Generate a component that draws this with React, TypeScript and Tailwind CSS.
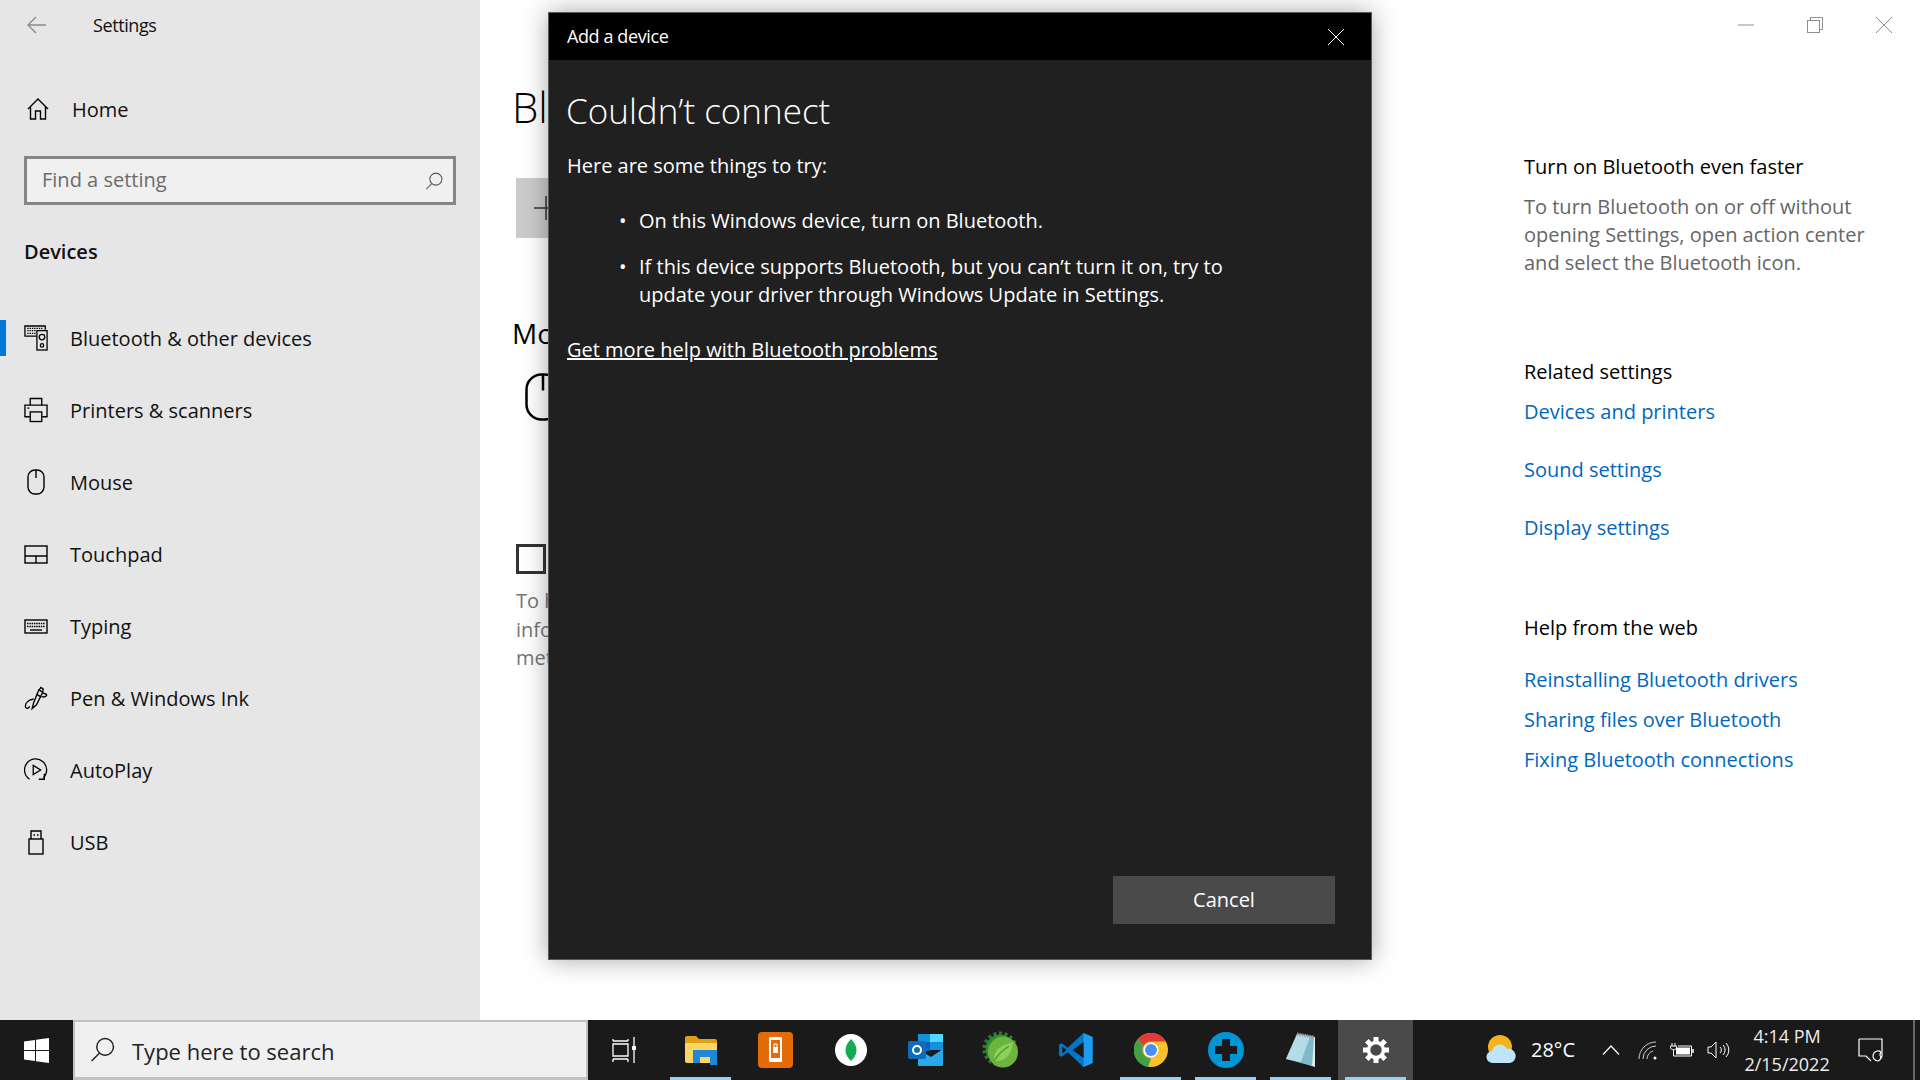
import { ReactNode } from "react";

const stroke = {
  fill: "none",
  stroke: "currentColor",
  strokeWidth: 1.4,
};

function BluetoothDevicesIcon() {
  return (
    <svg width="26" height="28" viewBox="0 0 26 28" {...stroke}>
      <path d="M14 12H1V1h22v4" />
      <path d="M3.5 3.500h17M3.500 6h9M3.500 9h9" strokeDasharray="1.5 1" />
      <rect x="14" y="6" width="11" height="21" />
      <circle cx="19.5" cy="13" r="3" />
      <circle cx="19.5" cy="22" r="1.8" />
    </svg>
  );
}

function PrinterIcon() {
  return (
    <svg width="25" height="26" viewBox="0 0 25 26" {...stroke}>
      <path d="M6.5 8V1h12v7" />
      <path d="M6 20H1V8h23v12h-5" />
      <rect x="6.5" y="15" width="12" height="10" />
      <path d="M3.5 11h2" />
    </svg>
  );
}

function MouseIcon() {
  return (
    <svg width="18" height="26" viewBox="0 0 18 26" {...stroke}>
      <rect x="1" y="1" width="16" height="24" rx="7" />
      <path d="M9 1v8" />
    </svg>
  );
}

function TouchpadIcon() {
  return (
    <svg width="24" height="19" viewBox="0 0 24 19" {...stroke}>
      <rect x="1" y="1" width="22" height="17" />
      <path d="M1 11h22M12 11v7" />
    </svg>
  );
}

function KeyboardIcon() {
  return (
    <svg width="24" height="15" viewBox="0 0 24 15" {...stroke}>
      <rect x="1" y="1" width="22" height="13" />
      <path d="M3 4.500h18M3 7.500h18" strokeDasharray="1.5 0.8" />
      <path d="M6 11h12" />
    </svg>
  );
}

function PenIcon() {
  return (
    <svg width="25" height="25" viewBox="0 0 25 25" {...stroke}>
      <path d="M10 17l-1.500 6 4.500-4 6.500-13-4-2.500z" />
      <path d="M13 8l5 3" />
      <path d="M16 3.500L17.500 1 20 2.500 19.500 6" />
      <path d="M20 7c3 .5 4.500 1.500 3 3-1 1-3 1-4.500 .5" />
      <path d="M10 13c-5 1-9 4-8.500 8 .3 2.500 3.500 2 4.500-.5" />
    </svg>
  );
}

function AutoPlayIcon() {
  return (
    <svg width="26" height="26" viewBox="0 0 26 26" {...stroke}>
      <path d="M6 23A12 12 0 1 1 21 21.5" />
      <path d="M10 8l8 5-8 5z" />
      <path d="M22 17v6h-6" />
    </svg>
  );
}

function UsbIcon() {
  return (
    <svg width="16" height="25" viewBox="0 0 16 25" {...stroke}>
      <path d="M3 9V1h10v8" />
      <rect x="1" y="9" width="14" height="15" />
      <path d="M5.500 5h1.500M9 5h1.500" />
    </svg>
  );
}

function SearchGlass({ size = 18 }: { size?: number }) {
  return (
    <svg width={size} height={size} viewBox="0 0 24 24" {...stroke}>
      <circle cx="14.5" cy="9.5" r="8" />
      <path d="M9 15.500L1.500 23" />
    </svg>
  );
}

function NavItem({ icon, label, active }: { icon: ReactNode; label: string; active?: boolean }) {
  return (
    <div className="relative flex h-[72px] items-center">
      {active && <div className="absolute top-[18px] left-0 h-[36px] w-[6px] bg-[#0078d7]" />}
      <div className="ml-[24px] flex w-[46px] items-center">
        <div className="flex w-[24px] justify-center">{icon}</div>
      </div>
      <span className="mt-[2px] text-[20px] text-[#111]">{label}</span>
    </div>
  );
}

function SettingsSidebar() {
  return (
    <aside className="flex h-full w-[480px] shrink-0 flex-col bg-[#e6e6e6]">
      <div className="flex h-[50px] items-center">
        <svg className="ml-[27px] text-[#8a8a8a]" width="19" height="18" viewBox="0 0 19 18" {...stroke}>
          <path d="M19 9H1M9 1L1 9l8 8" />
        </svg>
        <span className="ml-[47px] text-[18px] tracking-[-0.4px] text-[#111]">Settings</span>
      </div>
      <div className="mt-[23px] flex h-[72px] items-center">
        <svg className="ml-[27px]" width="22" height="22" viewBox="0 0 22 22" {...stroke}>
          <path d="M1 11L11 1l10 10" />
          <path d="M3.500 9v12h5v-8h5v8h5V9" />
        </svg>
        <span className="mt-[2px] ml-[23px] text-[20px] text-[#111]">Home</span>
      </div>
      <div className="mx-[24px] mt-[11px] flex h-[49px] items-center border-[3px] border-[#858585] bg-[#f0f0f0] pr-[10px] pl-[15px]">
        <span className="mb-[2px] flex-1 text-[20px] text-[#6b6b6b]">Find a setting</span>
        <span className="text-[#555]">
          <SearchGlass />
        </span>
      </div>
      <div className="mt-[32px] ml-[24px] h-[30px] text-[20px] leading-[30px] font-semibold text-[#111]">Devices</div>
      <nav className="mt-[35px] flex flex-col">
        <NavItem active icon={<BluetoothDevicesIcon />} label="Bluetooth & other devices" />
        <NavItem icon={<PrinterIcon />} label="Printers & scanners" />
        <NavItem icon={<MouseIcon />} label="Mouse" />
        <NavItem icon={<TouchpadIcon />} label="Touchpad" />
        <NavItem icon={<KeyboardIcon />} label="Typing" />
        <NavItem icon={<PenIcon />} label="Pen & Windows Ink" />
        <NavItem icon={<AutoPlayIcon />} label="AutoPlay" />
        <NavItem icon={<UsbIcon />} label="USB" />
      </nav>
    </aside>
  );
}

function MainColumn() {
  return (
    <div className="w-[1044px] shrink-0 overflow-hidden pt-[79px] pl-[32px]">
      <div className="h-[56px] text-[42px] leading-[56px] font-light text-black">Bl</div>
      <div className="mt-[43px] ml-[4px] flex h-[60px] w-[400px] items-center bg-[#cccccc] pl-[18px]">
        <svg width="24" height="24" viewBox="0 0 24 24" fill="none" stroke="#333" strokeWidth="1.5">
          <path d="M12 0v24M0 12h24" />
        </svg>
      </div>
      <div className="mt-[75px] h-[40px] text-[28px] leading-[40px] text-black">Mo</div>
      <div className="mt-[20px] ml-[13px] text-black">
        <svg width="36" height="48" viewBox="0 0 36 48" fill="none" stroke="currentColor" strokeWidth="2.5">
          <rect x="1.5" y="1.5" width="33" height="45" rx="15" />
          <path d="M18 1.500v16" />
        </svg>
      </div>
      <div className="mt-[123px] ml-[4px] size-[30px] border-[3px] border-[#333]" />
      <p className="mt-[13px] ml-[4px] w-[40px] overflow-hidden text-[20px] leading-[28.5px] whitespace-nowrap text-[#767676]">
        To h
        <br />
        info
        <br />
        met
      </p>
    </div>
  );
}

function InfoColumn() {
  const link = "text-[20px] leading-[28px] text-[#0067c0]";
  return (
    <div className="flex-1">
      <div className="flex h-[50px] justify-end pr-[2px] text-[#8f8f8f]">
        <div className="flex w-[69px] items-center justify-center">
          <svg width="16" height="16" viewBox="0 0 16 16" {...stroke} strokeWidth="1">
            <path d="M0 8h16" />
          </svg>
        </div>
        <div className="flex w-[69px] items-center justify-center">
          <svg width="16" height="16" viewBox="0 0 16 16" {...stroke} strokeWidth="1">
            <rect x="0.5" y="3.5" width="12" height="12" />
            <path d="M3.500 3.500v-3h12v12h-3" />
          </svg>
        </div>
        <div className="flex w-[69px] items-center justify-center">
          <svg width="16" height="16" viewBox="0 0 16 16" {...stroke} strokeWidth="1">
            <path d="M0 0l16 16M16 0L0 16" />
          </svg>
        </div>
      </div>
      <div className="mt-[103px] text-[20px] leading-[28px] text-black">Turn on Bluetooth even faster</div>
      <p className="mt-[12px] w-[396px] text-[20px] leading-[28px] text-[#666]">
        To turn Bluetooth on or off without
        <br />
        opening Settings, open action center
        <br />
        and select the Bluetooth icon.
      </p>
      <div className="mt-[81px] text-[20px] leading-[28px] text-black">Related settings</div>
      <div className="mt-[12px] flex flex-col gap-[30px]">
        <span className={link}>Devices and printers</span>
        <span className={link}>Sound settings</span>
        <span className={link}>Display settings</span>
      </div>
      <div className="mt-[72px] text-[20px] leading-[28px] text-black">Help from the web</div>
      <div className="mt-[24px] flex flex-col gap-[12px]">
        <span className={link}>Reinstalling Bluetooth drivers</span>
        <span className={link}>Sharing files over Bluetooth</span>
        <span className={link}>Fixing Bluetooth connections</span>
      </div>
    </div>
  );
}

function AddDeviceDialog() {
  return (
    <div className="absolute top-[12px] left-[548px] flex h-[948px] w-[824px] flex-col border border-[#5a5a5a] bg-[#202020] text-white shadow-[0_0_24px_rgba(0,0,0,0.35)]">
      <div className="flex h-[47px] shrink-0 items-center justify-between bg-black pr-[27px] pl-[18px]">
        <span className="text-[18px] tracking-[-0.4px]">Add a device</span>
        <svg width="16" height="16" viewBox="0 0 16 16" fill="none" stroke="white" strokeWidth="1">
          <path d="M0 0l16 16M16 0L0 16" />
        </svg>
      </div>
      <div className="flex flex-1 flex-col px-[17px]">
        <h1 className="mt-[27px] h-[48px] text-[35px] leading-[48px] font-light">Couldn’t connect</h1>
        <p className="mt-[17px] ml-[1px] text-[20px] leading-[28px]">Here are some things to try:</p>
        <ul className="mt-[27px] flex flex-col gap-[17px]">
          <li className="flex text-[20px] leading-[28.5px]">
            <span className="ml-[53px] w-[20px]">•</span>
            <span>On this Windows device, turn on Bluetooth.</span>
          </li>
          <li className="flex text-[20px] leading-[28.5px]">
            <span className="ml-[53px] w-[20px]">•</span>
            <span>
              If this device supports Bluetooth, but you can’t turn it on, try to
              <br />
              update your driver through Windows Update in Settings.
            </span>
          </li>
        </ul>
        <a className="mt-[26px] ml-[1px] text-[20px] leading-[28px] underline">Get more help with Bluetooth problems</a>
        <div className="mt-auto mb-[35px] flex justify-end pr-[19px]">
          <button className="h-[48px] w-[222px] bg-[#4a4a4a] text-[20px] text-white">Cancel</button>
        </div>
      </div>
    </div>
  );
}

function TaskSlot({ children, open, active }: { children: ReactNode; open?: boolean; active?: boolean }) {
  return (
    <div className={`relative flex h-full w-[75px] items-center justify-center ${active ? "bg-[#4a4a4a]" : ""}`}>
      {children}
      {open && <div className="absolute right-[7px] bottom-0 left-[7px] h-[3px] bg-[#99cff0]" />}
    </div>
  );
}

function FileExplorerIcon() {
  return (
    <svg width="32" height="30" viewBox="0 0 32 30">
      <path d="M0 3a2 2 0 0 1 2-2h9l3 3h16a2 2 0 0 1 2 2v4H0z" fill="#e0a016" />
      <path d="M0 8h32v18a2 2 0 0 1-2 2H2a2 2 0 0 1-2-2z" fill="#fbd667" />
      <path d="M8 15h24v15h-7v-8H15v6H8z" fill="#1e88d8" />
    </svg>
  );
}

function PhoneAppIcon() {
  return (
    <svg width="35" height="36" viewBox="0 0 35 36">
      <rect width="35" height="36" rx="4" fill="#e36c09" />
      <rect x="11" y="5" width="13" height="25" rx="1" fill="#fff" />
      <rect x="13" y="8" width="9" height="18" fill="#e36c09" />
      <rect x="15" y="15" width="5" height="6" fill="#fff" />
      <path d="M16 15v-3h3v3" fill="none" stroke="#fff" />
    </svg>
  );
}

function MongoIcon() {
  return (
    <svg width="32" height="32" viewBox="0 0 32 32">
      <circle cx="16" cy="16" r="16" fill="#fff" />
      <path d="M16 5c4 4 5.500 7.500 5.500 11.500S19 24 16 27c-3-3-5.500-6.500-5.500-10.500S12 9 16 5z" fill="#13aa52" />
    </svg>
  );
}

function OutlookIcon() {
  return (
    <svg width="36" height="34" viewBox="0 0 36 34">
      <rect x="10" y="1" width="25" height="16" fill="#1490df" />
      <rect x="22" y="1" width="13" height="8" fill="#50d9ff" />
      <rect x="10" y="9" width="12" height="9" fill="#0364b8" />
      <path d="M10 16l13 8 12-8v16a1 1 0 0 1-1 1H11a1 1 0 0 1-1-1z" fill="#28a8ea" />
      <rect x="0" y="8" width="18" height="18" rx="2" fill="#0f6cbd" />
      <circle cx="9" cy="17" r="4" fill="none" stroke="#fff" strokeWidth="2" />
    </svg>
  );
}

function SpringIcon() {
  return (
    <svg width="38" height="38" viewBox="0 0 38 38">
      <circle cx="18" cy="18" r="15.500" fill="none" stroke="#2a7d2e" strokeWidth="4" strokeDasharray="3 2.500" />
      <circle cx="18" cy="18" r="14.500" fill="#2f8a32" />
      <ellipse cx="21" cy="21" rx="15" ry="15.500" fill="#6db33f" />
      <path d="M12 30c-1-11 7-16 19-19-1 12-7 20-19 19z" fill="#8fd05a" />
      <path d="M12 30c4-7 9-11 15-15" fill="none" stroke="#4c9a2a" strokeWidth="1.500" />
    </svg>
  );
}

function VsCodeIcon() {
  return (
    <svg width="36" height="36" viewBox="0 0 100 100">
      <path d="M71 3L96 14v72L71 97 27 56 10 69 3 65V35l7-4 17 13z" fill="#0078c8" />
      <path d="M71 3L96 14v72L71 97z" fill="#1f9cf0" />
      <path d="M71 28v44L40 50z" fill="#1a1a1a" />
      <path d="M12 40l12 10-12 10z" fill="#1a1a1a" />
    </svg>
  );
}

function ChromeIcon() {
  return (
    <svg width="34" height="34" viewBox="0 0 34 34">
      <circle cx="17" cy="17" r="17" fill="#fbc02d" />
      <path d="M17 0a17 17 0 0 1 14.700 8.500H17a8.500 8.500 0 0 0-7.400 4.300L3.800 6.200A17 17 0 0 1 17 0z" fill="#e53935" />
      <path d="M3.800 6.200l5.800 6.600a8.500 8.500 0 0 0 7.400 12.700L14 34A17 17 0 0 1 3.800 6.200z" fill="#43a047" />
      <circle cx="17" cy="17" r="7.500" fill="#fff" />
      <circle cx="17" cy="17" r="6" fill="#4c8df6" />
    </svg>
  );
}

function PlusAppIcon() {
  return (
    <svg width="36" height="36" viewBox="0 0 36 36">
      <circle cx="18" cy="18" r="18" fill="#0095d5" />
      <path d="M14 7h8v7h7v8h-7v7h-8v-7H7v-8h7z" fill="#1a1a1a" />
    </svg>
  );
}

function NotepadIcon() {
  return (
    <svg width="32" height="36" viewBox="0 0 32 36">
      <path d="M14 2l16 3v30L24 33z" fill="#e3e8ea" />
      <path d="M12 2l17 3-2 29-26-7z" fill="#7fb9cc" />
      <path d="M12 2l13 2.500L16 30 1 27z" fill="#b5dbe6" />
      <path d="M12 2l17 3" stroke="#9a9a9a" strokeWidth="3" strokeDasharray="1.500 1" />
    </svg>
  );
}

function GearIcon() {
  return (
    <svg width="28" height="28" viewBox="0 0 28 28" fill="none" stroke="white">
      <circle cx="14" cy="14" r="7.500" strokeWidth="3.500" />
      <path d="M14 1v5M14 22v5M1 14h5M22 14h5M4.800 4.800l3.500 3.500M19.700 19.700l3.500 3.500M4.800 23.200l3.500-3.500M19.700 8.300l3.500-3.500" strokeWidth="5" />
    </svg>
  );
}

function Taskbar() {
  return (
    <footer className="flex h-[60px] shrink-0 items-center bg-[#1a1a1a] text-white">
      <div className="flex h-full w-[73px] items-center justify-center">
        <svg width="25" height="25" viewBox="0 0 25 25" fill="white">
          <path d="M0 3.500l11-1.500v10H0zM12 1.800L25 0v12H12zM0 13h11v10L0 21.500zM12 13h13v12l-13-1.800z" />
        </svg>
      </div>
      <div className="flex h-full w-[515px] items-center border-[2px] border-b-[3px] border-[#c2c2c2] bg-[#f0f0f0] pl-[15px] text-[#222]">
        <SearchGlass size={25} />
        <span className="mt-[3px] ml-[17px] text-[22px]">Type here to search</span>
      </div>
      <TaskSlot>
        <svg className="mr-[3px]" width="24" height="28" viewBox="0 0 24 28" fill="none" stroke="white" strokeWidth="1.300">
          <path d="M1 5V3M16 5V3M1 5h15M1 8h15v12H1zM1 23h15M1 23v3M16 23v3M22 1v9M22 14v13" />
          <rect x="20" y="10" width="4" height="4" fill="white" stroke="none" />
        </svg>
      </TaskSlot>
      <TaskSlot open>
        <FileExplorerIcon />
      </TaskSlot>
      <TaskSlot>
        <PhoneAppIcon />
      </TaskSlot>
      <TaskSlot>
        <MongoIcon />
      </TaskSlot>
      <TaskSlot>
        <OutlookIcon />
      </TaskSlot>
      <TaskSlot>
        <SpringIcon />
      </TaskSlot>
      <TaskSlot>
        <VsCodeIcon />
      </TaskSlot>
      <TaskSlot open>
        <ChromeIcon />
      </TaskSlot>
      <TaskSlot open>
        <PlusAppIcon />
      </TaskSlot>
      <TaskSlot open>
        <NotepadIcon />
      </TaskSlot>
      <TaskSlot open active>
        <GearIcon />
      </TaskSlot>

      <div className="ml-[73px] flex h-full flex-1 items-center">
        <svg width="30" height="30" viewBox="0 0 30 30">
          <circle cx="14" cy="12" r="12" fill="#f6b21b" />
          <path d="M7 28a6 6 0 0 1-1-12 8 8 0 0 1 15-2 7 7 0 0 1 3 14z" fill="#bfe3f8" />
        </svg>
        <span className="ml-[15px] text-[20px]">28°C</span>
        <svg className="ml-[27px]" width="18" height="10" viewBox="0 0 18 10" fill="none" stroke="white" strokeWidth="1.200">
          <path d="M1 9.500l8-8.500 8 8.500" />
        </svg>
        <svg className="ml-[18px]" width="19" height="19" viewBox="0 0 19 19" fill="none" stroke="#ccc" strokeWidth="1">
          <path d="M1 18A17 17 0 0 1 18 1M5 18A13 13 0 0 1 18 5M9 18a9 9 0 0 1 6-8" />
          <circle cx="17" cy="17" r="1.500" fill="white" stroke="none" />
        </svg>
        <svg className="ml-[13px]" width="24" height="14" viewBox="0 0 24 14" fill="none" stroke="white" strokeWidth="1">
          <path d="M2 0v3M5 0v3M0.500 3h6v2c0 2-6 2-6 0z" />
          <path d="M3.500 7v6h18V3H8" />
          <rect x="6" y="4.500" width="14" height="7" fill="white" stroke="none" />
          <path d="M23 6v4" strokeWidth="1.500" />
        </svg>
        <svg className="ml-[13px]" width="23" height="18" viewBox="0 0 23 18" fill="none" stroke="white" strokeWidth="1">
          <path d="M1 6h3l5-5v16l-5-5H1z" />
          <path d="M13 6a4 4 0 0 1 0 6M16 4a7 7 0 0 1 0 10M19 2a10 10 0 0 1 0 14" />
        </svg>
        <div className="ml-[13px] flex w-[88px] flex-col items-center text-[18px] leading-[28px] text-[#eee]">
          <span>4:14 PM</span>
          <span>2/15/2022</span>
        </div>
        <svg className="ml-[27px]" width="25" height="25" viewBox="0 0 25 25" fill="none" stroke="white" strokeWidth="1.200">
          <path d="M1 1h23v17a5 5 0 0 1-1 2M1 1v17h7l5 5" />
          <path d="M23 14a5 5 0 1 0-3 9 4.500 4.500 0 0 0 3-4 4 4 0 0 1 0-5z" />
        </svg>
        <div className="ml-auto h-full w-[2px] bg-[#666]" />
        <div className="w-[5px]" />
      </div>
    </footer>
  );
}

export default function App() {
  return (
    <div className="relative flex h-[1080px] w-[1920px] flex-col overflow-hidden bg-white font-['Open_Sans',sans-serif]">
      <div className="flex h-[1020px]">
        <SettingsSidebar />
        <MainColumn />
        <InfoColumn />
      </div>
      <AddDeviceDialog />
      <Taskbar />
    </div>
  );
}
